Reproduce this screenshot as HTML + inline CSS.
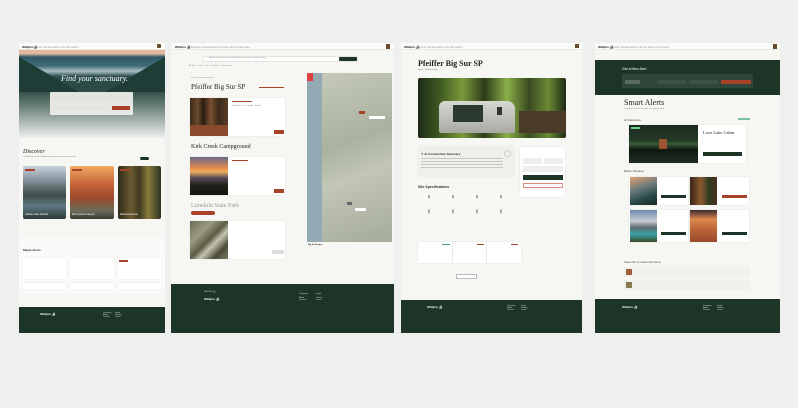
<!DOCTYPE html>
<html><head><meta charset="utf-8"><style>
*{margin:0;padding:0;box-sizing:border-box}
body{width:798px;height:408px;background:#efefef;position:relative;overflow:hidden;font-family:"Liberation Sans",sans-serif;color:#333}
.a{position:absolute}
.p{position:absolute;background:#f6f7f3}
.nav{position:absolute;left:0;right:0;top:0;height:7px;background:#fbfbf9;border-bottom:1px solid #ebebe6}
.t{position:absolute;font-size:3px;color:#555;white-space:nowrap}
.ft{position:absolute;background:#1d3427}
.ser{font-family:"Liberation Serif",serif}
.card{position:absolute;background:#fff;box-shadow:0 0 1px rgba(0,0,0,.15)}
.btn{position:absolute;background:#a8432a}
.dk{position:absolute;background:#1d3427}
.ln{position:absolute;height:1px;background:#ddd}
</style></head><body>

<!-- PANEL 1 -->
<div class="p" style="left:19px;top:43px;width:146px;height:290px">
 <div class="nav"></div>
 <div class="t" style="left:3px;top:2px;font-weight:bold;color:#222">Wildpin 🏕</div>
 <div class="t" style="left:14px;top:2px;color:#999">Explore Reservations Smart Alerts</div>
 <div class="a" style="left:138px;top:1px;width:4px;height:4px;background:#6a4a2a;border-radius:1px"></div>
 <div class="a" style="left:0;top:7px;width:146px;height:88px;background:linear-gradient(180deg,#e7b192 0%,#e0bca5 4%,#2f5864 8%,#3f6b78 18%,#a9c0c4 24%,#2a4c4c 30%,#2d4a43 45%,#6f837d 65%,#b9c2be 85%,#eef0ed 100%)"></div>
 <div class="a" style="left:0;top:14px;width:60px;height:35px;background:#1f3d36;clip-path:polygon(0 0,100% 100%,0 100%)"></div>
 <div class="a" style="left:86px;top:14px;width:60px;height:35px;background:#1f3d36;clip-path:polygon(100% 0,100% 100%,0 100%)"></div>
 <div class="a ser" style="left:42px;top:31px;font-size:8px;font-style:italic;color:#fff">Find your sanctuary.</div>
 <div class="a" style="left:31px;top:49px;width:83px;height:23px;background:rgba(240,240,236,.92);border-radius:1px"></div>
 <div class="a" style="left:34px;top:54px;width:24px;height:3px;background:#e2e2de"></div>
 <div class="a" style="left:60px;top:54px;width:24px;height:3px;background:#e2e2de"></div>
 <div class="a" style="left:86px;top:54px;width:24px;height:3px;background:#e2e2de"></div>
 <div class="a" style="left:34px;top:63px;width:55px;height:3px;background:#e2e2de"></div>
 <div class="btn" style="left:93px;top:63px;width:18px;height:4px"></div>
 <div class="a ser" style="left:4px;top:106px;font-size:6px;font-style:italic;color:#222">Discover</div>
 <div class="t" style="left:4px;top:113px;font-size:2px;color:#888">Curated by our AI, handpicked destinations for your next trip</div>
 <div class="dk" style="left:121px;top:114px;width:9px;height:3px;border-radius:2px"></div>
 <div class="a" style="left:4px;top:123px;width:43px;height:53px;border-radius:2px;background:linear-gradient(180deg,#c8d3dc 0%,#7d8a94 30%,#3c4c45 55%,#5f7986 75%,#2a3a36 100%)"></div>
 <div class="a" style="left:51px;top:123px;width:44px;height:53px;border-radius:2px;background:linear-gradient(180deg,#f0a860 0%,#c4633a 35%,#9c4a2c 60%,#6a6b5a 85%,#3b3b33 100%)"></div>
 <div class="a" style="left:99px;top:123px;width:43px;height:53px;border-radius:2px;background:linear-gradient(90deg,#2e2a1c,#6b5a30 30%,#3f3a22 50%,#8a7a3c 70%,#2b3320)"></div>
 <div class="btn" style="left:6px;top:126px;width:10px;height:2px"></div>
 <div class="btn" style="left:53px;top:126px;width:10px;height:2px"></div>
 <div class="btn" style="left:101px;top:126px;width:10px;height:2px"></div>
 <div class="t" style="left:6px;top:170px;color:#fff;font-size:2.5px">Glacier Lake Outlook</div>
 <div class="t" style="left:53px;top:170px;color:#fff;font-size:2.5px">Zion Sunset Canyon</div>
 <div class="t" style="left:101px;top:170px;color:#fff;font-size:2.5px">Redwood Grove</div>
 <div class="a" style="left:0;top:195px;width:146px;height:56px;background:#fafaf8"></div>
 <div class="t" style="left:4px;top:205px;font-weight:bold;color:#333">Maple Alerts</div>
 <div class="card" style="left:4px;top:215px;width:43px;height:21px"></div>
 <div class="card" style="left:51px;top:215px;width:44px;height:21px"></div>
 <div class="card" style="left:99px;top:215px;width:43px;height:21px"></div>
 <div class="btn" style="left:100px;top:217px;width:9px;height:1.5px"></div>
 <div class="card" style="left:4px;top:240px;width:43px;height:6px"></div>
 <div class="card" style="left:51px;top:240px;width:44px;height:6px"></div>
 <div class="card" style="left:99px;top:240px;width:43px;height:6px"></div>
 <div class="ft" style="left:0;top:264px;width:146px;height:26px"></div>
 <div class="t" style="left:21px;top:269px;color:#dfe;font-weight:bold">Wildpin 🏕</div>
 <div class="t" style="left:84px;top:269px;color:#cdd;font-size:2px">Company<br>About<br>Careers</div>
 <div class="t" style="left:96px;top:269px;color:#cdd;font-size:2px">Legal<br>Privacy<br>Terms</div>
</div>

<!-- PANEL 2 -->
<div class="p" style="left:171px;top:43px;width:223px;height:290px">
 <div class="nav"></div>
 <div class="t" style="left:4px;top:2px;font-weight:bold;color:#222">Wildpin 🏕</div>
 <div class="t" style="left:20px;top:2px;color:#999">Explore Reservations Smart Alerts Favorites</div>
 <div class="a" style="left:215px;top:1px;width:4px;height:5px;background:#6a4a2a"></div>
 <div class="a" style="left:32px;top:13px;width:155px;height:6px;background:#fff;border:1px solid #e5e5e0"></div>
 <div class="t" style="left:38px;top:14px;font-size:2px;color:#888">Big Sur, quiet and remote within the next month, 2 people &amp; dog</div>
 <div class="dk" style="left:168px;top:14px;width:18px;height:4px;border-radius:1px"></div>
 <div class="t" style="left:18px;top:22px;font-size:2px;color:#999">All filters · Dates · Price · Amenities · Pet friendly</div>
 <div class="t" style="left:20px;top:34px;font-size:2px;color:#999">Sort by  [Recommended ▾]</div>
 <div class="a ser" style="left:20px;top:40px;font-size:7px;color:#222">Pfeiffer Big Sur SP</div>
 <div class="btn" style="left:88px;top:44px;width:25px;height:1px"></div>
 <div class="card" style="left:19px;top:55px;width:95px;height:38px"></div>
 <div class="a" style="left:19px;top:55px;width:38px;height:38px;background:linear-gradient(90deg,#3b2a1a,#6a4a2c 20%,#2a1c12 35%,#7a5030 55%,#3a2a1a 75%,#5a3d22);"></div>
 <div class="a" style="left:19px;top:82px;width:38px;height:11px;background:#8a4a2c"></div>
 <div class="btn" style="left:61px;top:58px;width:20px;height:1px"></div>
 <div class="t" style="left:61px;top:62px;font-size:2px;color:#888">Waterfront · Pet friendly · Shade</div>
 <div class="btn" style="left:103px;top:87px;width:10px;height:4px"></div>
 <div class="a ser" style="left:20px;top:101px;font-size:6px;color:#222">Kirk Creek Campground</div>
 <div class="card" style="left:19px;top:114px;width:95px;height:38px"></div>
 <div class="a" style="left:19px;top:114px;width:38px;height:38px;background:linear-gradient(180deg,#6a6a88 0%,#e88a4a 30%,#f0b060 38%,#5a4a5a 55%,#1e2018 75%,#151812)"></div>
 <div class="btn" style="left:61px;top:117px;width:16px;height:1px"></div>
 <div class="btn" style="left:103px;top:146px;width:10px;height:4px"></div>
 <div class="a ser" style="left:20px;top:160px;font-size:6px;color:#999">Limekiln State Park</div>
 <div class="btn" style="left:20px;top:168px;width:24px;height:4px;border-radius:2px"></div>
 <div class="card" style="left:19px;top:178px;width:95px;height:38px"></div>
 <div class="a" style="left:19px;top:178px;width:38px;height:38px;background:linear-gradient(135deg,#6d6b55,#9c9a82 30%,#5a5a44 50%,#c8c6b0 62%,#4a4a38 80%,#7a7a62)"></div>
 <div class="a" style="left:101px;top:207px;width:12px;height:4px;background:#ddd"></div>
 <div class="a" style="left:136px;top:30px;width:85px;height:169px;background:#b7bdaf;border-radius:1px;overflow:hidden">
  <div class="a" style="left:0;top:0;width:15px;height:169px;background:#93a9b3"></div>
  <div class="a" style="left:15px;top:0;width:70px;height:169px;background:linear-gradient(160deg,#c5c9b8,#aab29f 40%,#c2c6b5 60%,#a5ab9a)"></div>
  <div class="a" style="left:0;top:0;width:6px;height:8px;background:#e04040"></div>
  <div class="btn" style="left:52px;top:38px;width:6px;height:3px"></div>
  <div class="a" style="left:62px;top:43px;width:16px;height:3px;background:#fff"></div>
  <div class="a" style="left:40px;top:129px;width:5px;height:3px;background:#666"></div>
  <div class="a" style="left:48px;top:135px;width:11px;height:3px;background:#fff"></div>
 </div>
 <div class="t" style="left:137px;top:201px;font-size:2px;color:#333;font-weight:bold">Big Sur Region</div>
 <div class="ft" style="left:0;top:241px;width:223px;height:49px"></div>
 <div class="t" style="left:33px;top:248px;color:#cdd;font-size:2px">WILDPIN 🏕</div>
 <div class="t" style="left:33px;top:254px;color:#eee;font-weight:bold">Wildpin 🏕</div>
 <div class="t" style="left:128px;top:250px;color:#cdd;font-size:2px">Company<br><br>About<br>Careers</div>
 <div class="t" style="left:145px;top:250px;color:#cdd;font-size:2px">Legal<br><br>Privacy<br>Terms</div>
</div>

<!-- PANEL 3 -->
<div class="p" style="left:401px;top:43px;width:181px;height:290px">
 <div class="nav"></div>
 <div class="t" style="left:3px;top:2px;font-weight:bold;color:#222">Wildpin 🏕</div>
 <div class="t" style="left:16px;top:2px;color:#999">Explore Reservations Smart Alerts</div>
 <div class="a" style="left:174px;top:1px;width:4px;height:4px;background:#6a4a2a"></div>
 <div class="a ser" style="left:17px;top:16px;font-size:8px;font-weight:bold;color:#222">Pfeiffer Big Sur SP</div>
 <div class="t" style="left:17px;top:26px;font-size:2px;color:#777">Site 3 · Redwood loop</div>
 <div class="a" style="left:17px;top:35px;width:148px;height:60px;border-radius:2px;background:linear-gradient(90deg,#1e2a14,#3f5a22 15%,#7a9a3c 30%,#2c3a1a 45%,#8ab048 60%,#3a4a22 75%,#6b8a34 88%,#1e2a14)"></div>
 <div class="a" style="left:38px;top:58px;width:76px;height:32px;background:linear-gradient(180deg,#d8d8d2,#a9aaa3);border-radius:6px 8px 2px 2px"></div>
 <div class="a" style="left:52px;top:62px;width:30px;height:17px;background:#2a3a30"></div>
 <div class="a" style="left:96px;top:64px;width:5px;height:8px;background:#333"></div>
 <div class="a" style="left:118px;top:68px;width:47px;height:22px;background:#4a3a28"></div>
 <div class="card" style="left:17px;top:103px;width:96px;height:30px;background:#efefeb"></div>
 <div class="t" style="left:20px;top:109px;font-weight:bold;color:#333">✦ AI Curated Site Summary</div>
 <div class="a" style="left:20px;top:115px;width:82px;height:12px;background:repeating-linear-gradient(180deg,#c8c8c2 0 1px,transparent 1px 3px)"></div>
 <div class="a" style="left:103px;top:107px;width:7px;height:7px;border-radius:50%;border:1px solid #ccc"></div>
 <div class="card" style="left:119px;top:104px;width:45px;height:50px"></div>
 <div class="a" style="left:122px;top:115px;width:19px;height:6px;background:#eee"></div>
 <div class="a" style="left:143px;top:115px;width:19px;height:6px;background:#eee"></div>
 <div class="a" style="left:122px;top:123px;width:40px;height:6px;background:#eee"></div>
 <div class="dk" style="left:122px;top:132px;width:40px;height:5px"></div>
 <div class="a" style="left:122px;top:140px;width:40px;height:5px;border:1px solid #e08a7a"></div>
 <div class="t" style="left:17px;top:142px;font-weight:bold;color:#333;font-size:3.5px">Site Specifications</div>
 <div class="a" style="left:18px;top:152px;width:97px;height:32px;background:repeating-linear-gradient(90deg,transparent 0 9px,#aaa 9px 11px,transparent 11px 24px)"></div>
 <div class="a" style="left:18px;top:152px;width:97px;height:32px;background:#f6f7f3;mask:none;clip-path:polygon(0 10%,100% 10%,100% 45%,0 45%,0 58%,100% 58%,100% 100%,0 100%)"></div>
 <div class="card" style="left:17px;top:199px;width:34px;height:21px"></div>
 <div class="card" style="left:52px;top:199px;width:33px;height:21px"></div>
 <div class="card" style="left:86px;top:199px;width:34px;height:21px"></div>
 <div class="a" style="left:41px;top:201px;width:8px;height:1px;background:#4aa080"></div>
 <div class="btn" style="left:76px;top:201px;width:7px;height:1px"></div>
 <div class="btn" style="left:110px;top:201px;width:7px;height:1px"></div>
 <div class="a" style="left:55px;top:231px;width:21px;height:5px;border:1px solid #bbb;background:#fff"></div>
 <div class="ft" style="left:0;top:257px;width:181px;height:33px"></div>
 <div class="t" style="left:26px;top:262px;color:#eee;font-weight:bold">Wildpin 🏕</div>
 <div class="t" style="left:106px;top:262px;color:#cdd;font-size:2px">Company<br>About<br>Careers</div>
 <div class="t" style="left:120px;top:262px;color:#cdd;font-size:2px">Legal<br>Privacy<br>Terms</div>
</div>

<!-- PANEL 4 -->
<div class="p" style="left:595px;top:43px;width:185px;height:290px">
 <div class="nav"></div>
 <div class="t" style="left:3px;top:2px;font-weight:bold;color:#222">Wildpin 🏕</div>
 <div class="t" style="left:15px;top:2px;color:#999">Explore Reservations Smart Alerts Favorites</div>
 <div class="a" style="left:178px;top:1px;width:4px;height:5px;background:#6a4a2a"></div>
 <div class="ft" style="left:0;top:17px;width:185px;height:35px"></div>
 <div class="t" style="left:27px;top:24px;color:#fff;font-size:3.5px">Get a New Alert</div>
 <div class="a" style="left:27px;top:31px;width:131px;height:14px;background:#2f463a"></div>
 <div class="a" style="left:30px;top:37px;width:15px;height:4px;background:#5a6c62"></div>
 <div class="a" style="left:62px;top:37px;width:29px;height:4px;background:#3c5246"></div>
 <div class="a" style="left:94px;top:37px;width:29px;height:4px;background:#3c5246"></div>
 <div class="btn" style="left:126px;top:37px;width:30px;height:4px"></div>
 <div class="a ser" style="left:29px;top:55px;font-size:8px;color:#222">Smart Alerts</div>
 <div class="t" style="left:29px;top:65px;font-size:2px;color:#888">Your AI-powered wild guide for camping alerts</div>
 <div class="t" style="left:29px;top:75px;color:#444">AI Discovery</div>
 <div class="a" style="left:143px;top:75px;width:12px;height:2px;background:#7ac0a0"></div>
 <div class="card" style="left:34px;top:82px;width:117px;height:38px"></div>
 <div class="a" style="left:34px;top:82px;width:69px;height:38px;background:linear-gradient(180deg,#1a2a1e 0%,#243a28 40%,#3a5a3a 50%,#101810 65%,#1e2e22 100%)"></div>
 <div class="a" style="left:36px;top:84px;width:9px;height:1.5px;background:#6cd090"></div>
 <div class="a" style="left:64px;top:96px;width:8px;height:10px;background:#b85a30;opacity:.8"></div>
 <div class="a ser" style="left:108px;top:87px;font-size:4.5px;color:#222">Love Lake Cabin</div>
 <div class="dk" style="left:108px;top:109px;width:39px;height:4px"></div>
 <div class="t" style="left:29px;top:126px;color:#444">Better Pictures</div>
 <div class="card" style="left:34px;top:134px;width:59px;height:28px"></div>
 <div class="card" style="left:95px;top:134px;width:59px;height:28px"></div>
 <div class="card" style="left:34px;top:167px;width:59px;height:32px"></div>
 <div class="card" style="left:95px;top:167px;width:59px;height:32px"></div>
 <div class="a" style="left:35px;top:134px;width:27px;height:28px;background:linear-gradient(160deg,#e0a070,#6a7a7a 40%,#2a4a4a 70%,#1a2a20)"></div>
 <div class="a" style="left:95px;top:134px;width:27px;height:28px;background:linear-gradient(90deg,#3a2418,#8a5a30 40%,#2e3a1e 70%,#4a3020)"></div>
 <div class="a" style="left:35px;top:167px;width:27px;height:32px;background:linear-gradient(180deg,#6a8ab0,#c8ccd0 35%,#5a6a70 55%,#3aa0a8 75%,#3a4a2a)"></div>
 <div class="a" style="left:95px;top:167px;width:27px;height:32px;background:linear-gradient(180deg,#3a2a30,#e08a50 30%,#c06a3a 55%,#9a4a2a 100%)"></div>
 <div class="dk" style="left:66px;top:152px;width:25px;height:3px"></div>
 <div class="btn" style="left:127px;top:152px;width:25px;height:3px"></div>
 <div class="dk" style="left:66px;top:189px;width:25px;height:3px"></div>
 <div class="dk" style="left:127px;top:189px;width:25px;height:3px"></div>
 <div class="t" style="left:29px;top:217px;color:#555">Searches &amp; Historical Alerts</div>
 <div class="a" style="left:29px;top:224px;width:126px;height:10px;background:#f0f0ec"></div>
 <div class="a" style="left:29px;top:237px;width:126px;height:10px;background:#f0f0ec"></div>
 <div class="a" style="left:31px;top:226px;width:6px;height:6px;background:#a06040"></div>
 <div class="a" style="left:31px;top:239px;width:6px;height:6px;background:#8a7a50"></div>
 <div class="ft" style="left:0;top:256px;width:185px;height:34px"></div>
 <div class="t" style="left:27px;top:262px;color:#eee;font-weight:bold">Wildpin 🏕</div>
 <div class="t" style="left:108px;top:262px;color:#cdd;font-size:2px">Company<br>About<br>Careers</div>
 <div class="t" style="left:122px;top:262px;color:#cdd;font-size:2px">Legal<br>Privacy<br>Terms</div>
</div>
</body></html>
